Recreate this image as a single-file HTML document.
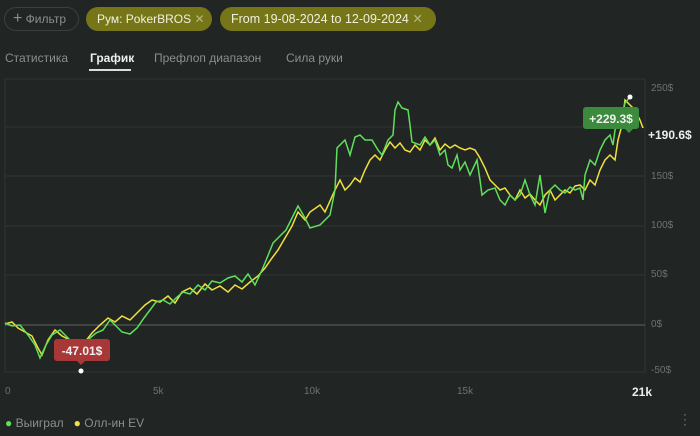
<!DOCTYPE html>
<html><head><meta charset="utf-8"><style>
body{margin:0;width:700px;height:436px;background:#212624;font-family:"Liberation Sans",sans-serif;overflow:hidden;position:relative;color:#ddd}
.chip{position:absolute;top:7px;height:24px;border-radius:12px;font-size:12px;line-height:24px;box-sizing:border-box;white-space:nowrap}
.tab{position:absolute;top:51px;font-size:12px;color:#8a8f8c;white-space:nowrap}
.ax{position:absolute;font-size:10px;color:#6d726f}
</style></head><body>
<div class="chip" style="left:4px;width:75px;border:1px solid #3a403d;color:#8a8f8c;padding-left:8px;line-height:22px"><span style="font-size:16px">+</span> Фильтр</div>
<div class="chip" style="left:86px;width:126px;background:#767618;color:#f0f0e0;padding-left:11px">Рум: PokerBROS <span style="color:#b8b888">✕</span></div>
<div class="chip" style="left:220px;width:216px;background:#767618;color:#f0f0e0;padding-left:11px;font-size:12.5px">From 19-08-2024 to 12-09-2024 <span style="color:#b8b888">✕</span></div>
<div class="tab" style="left:5px">Статистика</div>
<div class="tab" style="left:90px;color:#eee;font-weight:bold">График</div>
<div style="position:absolute;left:89px;top:69px;width:42px;height:2px;background:#ddd"></div>
<div class="tab" style="left:154px">Префлоп диапазон</div>
<div class="tab" style="left:286px">Сила руки</div>
<svg style="position:absolute;left:0;top:0" width="700" height="436">
<g stroke="#2c312f" stroke-width="1.5">
<line x1="5" y1="79" x2="645" y2="79"/>
<line x1="5" y1="79" x2="5" y2="373"/><line x1="645" y1="79" x2="645" y2="373"/>
<line x1="5" y1="127" x2="645" y2="127"/><line x1="5" y1="176" x2="645" y2="176"/><line x1="5" y1="226" x2="645" y2="226"/><line x1="5" y1="275" x2="645" y2="275"/><line x1="5" y1="372" x2="645" y2="372"/>
</g>
<line x1="5" y1="325" x2="645" y2="325" stroke="#4a4f4c" stroke-width="1.5"/>
<polyline fill="none" stroke="#f0e040" stroke-width="1.5" points="5,324 12,322 18,328 25,332 32,336 38,348 42,355 48,340 55,330 62,336 70,340 78,345 85,342 92,333 100,325 108,318 115,322 122,316 130,320 138,312 145,305 152,300 160,302 168,296 175,303 182,292 190,288 197,294 205,284 212,290 220,286 228,292 235,285 242,289 250,282 258,276 265,268 272,258 278,250 285,238 292,226 298,212 305,220 310,212 320,205 325,212 335,190 340,180 345,190 350,185 355,178 360,182 365,170 370,160 375,155 380,160 385,150 390,142 395,148 400,143 405,150 410,152 415,145 420,150 425,140 430,145 435,138 440,150 445,144 450,148 455,145 460,148 465,150 470,148 475,150 480,158 485,168 490,180 495,185 500,190 505,188 510,195 515,200 520,190 525,198 530,194 535,200 540,205 545,195 550,190 555,200 560,195 565,190 570,193 575,186 580,185 585,190 590,180 595,185 600,170 605,160 610,155 615,160 618,140 622,125 625,100 630,105 635,110 640,120 643,128"/>
<polyline fill="none" stroke="#5ee05a" stroke-width="1.5" points="5,323 12,326 20,325 28,335 35,345 40,358 46,345 52,335 60,330 66,336 72,342 80,360 84,343 90,338 96,333 103,330 110,320 116,326 122,332 130,334 137,328 144,318 150,310 156,302 163,300 170,304 176,298 183,292 190,294 198,285 205,290 212,281 220,283 228,278 235,276 242,282 248,274 255,285 262,270 267,258 273,243 280,236 286,230 292,218 298,206 305,218 310,228 320,225 330,215 335,190 337,148 345,140 350,155 355,137 360,135 365,140 372,140 378,150 382,155 388,140 393,135 395,110 398,102 402,108 408,110 410,125 412,142 420,145 425,137 430,145 435,140 440,155 445,150 448,165 452,168 457,155 460,170 465,162 470,175 477,160 480,180 482,195 488,190 495,188 500,200 505,205 510,195 515,200 520,195 525,180 530,195 535,205 540,175 545,213 550,190 555,185 560,190 565,193 570,187 575,190 580,188 583,200 585,175 590,160 595,165 600,150 605,140 610,135 613,145 615,130 620,120 625,103 630,97"/>
<circle cx="630" cy="97" r="2.5" fill="#fff"/>
<circle cx="81" cy="371" r="2.5" fill="#fff"/>
<rect x="583" y="107" width="56" height="22" rx="3" fill="#3c8a3c"/>
<path d="M625 129 L629 133 L633 129Z" fill="#3c8a3c"/>
<text x="611" y="123" fill="#f0f0f0" font-size="12" font-weight="bold" text-anchor="middle" font-family="Liberation Sans">+229.3$</text>
<rect x="54" y="339" width="56" height="22" rx="3" fill="#a83838"/>
<path d="M77 361 L81 365 L85 361Z" fill="#a83838"/>
<text x="82" y="355" fill="#f0f0f0" font-size="12" font-weight="bold" text-anchor="middle" font-family="Liberation Sans">-47.01$</text>
</svg>
<div class="ax" style="left:651px;top:83px">250$</div>
<div class="ax" style="left:651px;top:171px">150$</div>
<div class="ax" style="left:651px;top:220px">100$</div>
<div class="ax" style="left:651px;top:269px">50$</div>
<div class="ax" style="left:651px;top:319px">0$</div>
<div class="ax" style="left:651px;top:365px">-50$</div>
<div style="position:absolute;left:648px;top:128px;font-size:12px;font-weight:bold;color:#eee">+190.6$</div>
<div class="ax" style="left:5px;top:386px">0</div>
<div class="ax" style="left:153px;top:386px">5k</div>
<div class="ax" style="left:304px;top:386px">10k</div>
<div class="ax" style="left:457px;top:386px">15k</div>
<div style="position:absolute;left:632px;top:385px;font-size:12px;font-weight:bold;color:#eee">21k</div>
<div style="position:absolute;left:5px;top:416px;font-size:12px;color:#8a8f8c"><span style="color:#5ee05a">●</span> Выиграл &nbsp; <span style="color:#f0e040">●</span> Олл-ин EV</div>
<div style="position:absolute;left:683px;top:412px;font-size:12px;color:#8a8f8c;line-height:5px">·<br>·<br>·</div>
</body></html>
